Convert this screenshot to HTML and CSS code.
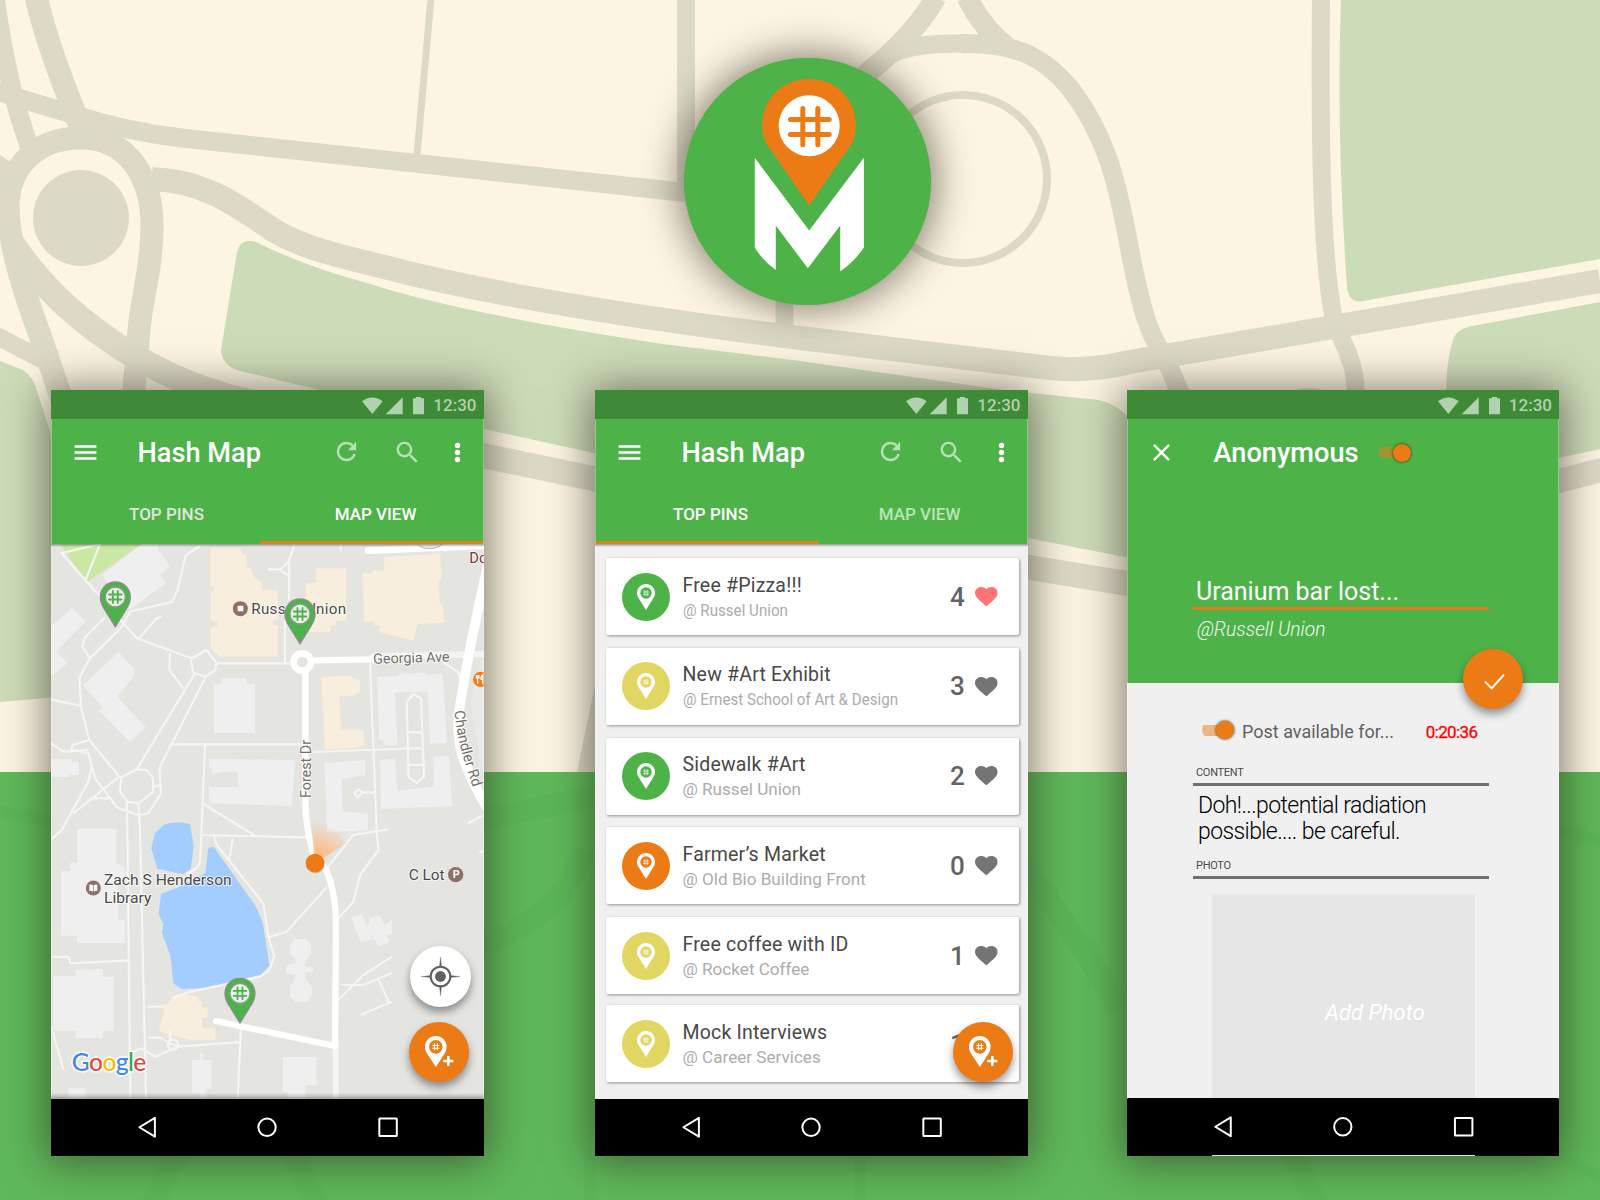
FILE: index.html
```html
<!DOCTYPE html>
<html lang="en">
<head>
<meta charset="utf-8">
<title>Hash Map</title>
<link rel="stylesheet" href="styles.css">
</head>
<body>

<!-- shared symbols -->
<svg class="defs" aria-hidden="true">
  <symbol id="i-menu" viewBox="0 0 24 24"><path d="M3 18h18v-2H3v2zm0-5h18v-2H3v2zm0-7v2h18V6H3z"/></symbol>
  <symbol id="i-refresh" viewBox="0 0 24 24"><path d="M17.65 6.35C16.2 4.9 14.21 4 12 4c-4.42 0-7.99 3.58-7.99 8s3.57 8 7.99 8c3.73 0 6.84-2.55 7.73-6h-2.08c-.82 2.33-3.04 4-5.65 4-3.31 0-6-2.69-6-6s2.69-6 6-6c1.66 0 3.14.69 4.22 1.78L13 11h7V4l-2.35 2.35z"/></symbol>
  <symbol id="i-search" viewBox="0 0 24 24"><path d="M15.5 14h-.79l-.28-.27C15.41 12.59 16 11.11 16 9.5 16 5.91 13.09 3 9.5 3S3 5.91 3 9.5 5.91 16 9.5 16c1.61 0 3.09-.59 4.23-1.57l.27.28v.79l5 4.99L20.49 19l-4.99-5zm-6 0C7.01 14 5 11.99 5 9.5S7.01 5 9.5 5 14 7.01 14 9.5 11.99 14 9.5 14z"/></symbol>
  <symbol id="i-more" viewBox="0 0 24 24"><circle cx="12" cy="6.2" r="2.2"/><circle cx="12" cy="12" r="2.2"/><circle cx="12" cy="17.8" r="2.2"/></symbol>
  <symbol id="i-close" viewBox="0 0 24 24"><path d="M19 6.41L17.59 5 12 10.59 6.41 5 5 6.41 10.59 12 5 17.59 6.41 19 12 13.41 17.59 19 19 17.59 13.41 12z"/></symbol>
  <symbol id="i-heart" viewBox="2 3 20 18.35" preserveAspectRatio="none"><path d="M12 21.35l-1.45-1.32C5.4 15.36 2 12.28 2 8.5 2 5.42 4.42 3 7.5 3c1.74 0 3.41.81 4.5 2.09C13.09 3.81 14.76 3 16.5 3 19.58 3 22 5.42 22 8.5c0 3.78-3.4 6.86-8.55 11.54L12 21.35z"/></symbol>
  <symbol id="i-status" viewBox="0 0 62 18">
    <path d="M0 4.2C6 -.9 14.700 -.9 20.700 4.200L10.350 17z"/><path d="M23.700 17.300H40.700V.3z"/><path d="M51 1.300h3V0h5v1.300h3v16H51z"/>
  </symbol>
  <symbol id="i-nav" viewBox="0 0 433 57">
    <g fill="none" stroke="#fff" stroke-width="2" stroke-linejoin="round"><path d="M104 18.800V37.700L88.500 28.250z"/><circle cx="216.300" cy="28.300" r="8.700"/><rect x="328.700" y="19.500" width="17.500" height="17.500" rx=".6"/></g>
  </symbol>
  <symbol id="i-pin" viewBox="0 0 54 78">
    <path fill="#fff" fill-rule="evenodd" d="M27 0C42 0 54 12 54 27C54 35 51 40 47 46L27 78L7 46C3 40 0 35 0 27C0 12 12 0 27 0ZM27 10A17 17 0 1 0 27 44A17 17 0 1 0 27 10Z"/>
    <path d="M23.500 19.500v16M30.500 19.500v16M19 24h16M19 31h16" fill="none" stroke="#fff" stroke-width="2" stroke-linecap="round"/>
  </symbol>
  <symbol id="i-fab" viewBox="0 0 180 180">
    <path fill="#fff" fill-rule="evenodd" d="M80.500 42C98 42 113 56 113 74C113 83 110 89 106 96L80.500 135L55 96C51 89 48 83 48 74C48 56 63 42 80.500 42ZM80.500 54A20.500 20.500 0 1 0 80.500 95A20.500 20.500 0 1 0 80.500 54Z"/>
    <path d="M76 65v19M85 65v19M71 70.500h19M71 79h19" fill="none" stroke="#fff" stroke-width="3" stroke-linecap="round"/>
    <path d="M118 102v30M103 117h30" fill="none" stroke="#fff" stroke-width="7.500"/>
  </symbol>
  <symbol id="i-mappin" viewBox="0 0 96 140" overflow="visible">
    <path d="M48 3C74 3 93 23 93 49C93 62 89 71 82 82L48 137L14 82C7 71 3 62 3 49C3 23 22 3 48 3Z" fill="#4db349" stroke="#8b8f8a" stroke-width="4"/>
    <circle cx="48" cy="48" r="30" fill="#eceeec" stroke="#8b9a8a" stroke-width="4"/>
    <path d="M40.500 30v36M55.500 30v36M29 40.500h38M29 55.500h38" fill="none" stroke="#4db349" stroke-width="5.500" stroke-linecap="round"/>
  </symbol>
</svg>

<!-- backdrop street map -->
<svg class="backdrop" viewBox="0 0 1600 1200" aria-hidden="true">
  <rect width="1600" height="1200" fill="#fcf5e2"/>
  <g fill="#cddcb8">
    <path d="M237 252Q240 240 250 241Q255 241 262 245Q310 268 367 283Q459 313 663 344L800 361L1004 390L1098 400Q1113 402 1130 418V558L594 453L484 429L240 371Q222 366 221 350Z"/>
    <path d="M0 361L23 370Q34 377 38 394L56 450V697L0 702Z"/>
    <path d="M1341 0Q1336 130 1347 287Q1349 304 1363 301L1600 259V0Z"/>
    <path d="M1600 302L1472 326Q1455 329 1452 343Q1446 365 1446 395V470H1540L1559 458L1600 449Z"/>
  </g>
  <g fill="none" stroke="#dcdac6">
    <path stroke-width="19" d="M-10 89L25 100L78 116Q130 132 182 138L690 193"/>
    <path stroke-width="18" d="M686 0V190M784.500 290V330M-5 335L45 361"/>
    <path stroke-width="7" d="M431 -2L417 155"/>
    <path stroke-width="19" d="M-5 -3Q8 90 30 148"/>
    <path stroke-width="23" d="M36 -3Q50 55 82 130"/>
    <path stroke-width="22" d="M-8 163L15 178"/>
    <path stroke-width="23" d="M62 400L40 335Q8 250 8 205C9 165 38 138 81 138C130 138 152 180 152 226C152 270 141 300 139 330L133 400"/>
    <path stroke-width="25" d="M12 243Q40 285 80 318Q150 375 230 397L480 455L595 479L1027 567L1130 584"/>
    <path stroke-width="24" d="M152 179C210 181 245 212 275 231C310 252 360 260 408 273Q550 307 800 338L1050 368Q1090 372 1130 362L1600 281"/>
    <path stroke-width="18" d="M850 92C882 47 915 43.500 960 43.500"/>
    <path stroke-width="19" d="M960 43.500C1020 42 1046 60 1070 88C1110 140 1119 195 1128 240C1137 290 1147 335 1164 355L1181 395"/>
    <path stroke-width="21" d="M936 -3Q915 35 864 76M967 -3Q982 28 1008 48"/>
    <circle cx="963" cy="179" r="84" stroke-width="8"/>
    <path stroke-width="18" d="M1321 -3C1320 120 1320 250 1334 320C1345 350 1356 360 1356 400"/>
    <circle cx="1309" cy="430" r="34" stroke-width="16"/>
    <path stroke-width="24" d="M1550 483L1605 469"/>
  </g>
  <circle cx="81" cy="218" r="48" fill="#dcdac6"/>
  <path d="M598 670L577 772H620V670Z" fill="#dcdac6"/>
  <rect y="772" width="1600" height="428" fill="#5fb95a"/>
  <g fill="none" stroke="#57b152" stroke-opacity=".35">
    <path stroke-width="22" d="M480 820L600 795M480 945Q560 920 585 850M180 1150L150 1210M290 1150L320 1210M1020 860Q1080 940 1120 1010M1290 1150L1320 1210"/>
    <path stroke-width="12" d="M590 1150V1210M860 1150V1210M0 812L55 822M1555 830L1605 842M1555 1150Q1580 1170 1605 1178"/>
  </g>
</svg>

<header class="brand">
  <svg class="logo" viewBox="73 54 740 740" role="img" aria-label="Hash Map">
    <circle cx="443" cy="424" r="370" fill="#4db349"/>
    <path d="M448 117C530 117 588 178 588 257C588 282 582 300 573 315L448 496L323 315C313 300 307 282 307 257C307 178 366 117 448 117Z" fill="#ec7b16"/>
    <circle cx="448" cy="257" r="91.500" fill="#fff"/>
    <path d="M429 205V314M474 205V314M392 238H508M392 283H508" fill="none" stroke="#ec7b16" stroke-width="15" stroke-linecap="round"/>
    <path d="M285 353L448 571L612 353V622Q585 662 541 694V556L444 684L348 556V689Q310 662 285 622Z" fill="#fff"/>
  </svg>
</header>

<main class="phones">

  <!-- map view -->
  <section class="phone">
    <div class="status"><svg class="status-icons"><use href="#i-status"/></svg><span>12:30</span></div>
    <div class="toolbar">
      <svg class="icon"><use href="#i-menu"/></svg>
      <h1 class="title">Hash Map</h1>
      <svg class="icon faded refresh"><use href="#i-refresh"/></svg>
      <svg class="icon faded search"><use href="#i-search"/></svg>
      <svg class="icon"><use href="#i-more"/></svg>
    </div>
    <nav class="tabs"><span class="tab tab-pins dim-grey">TOP PINS</span><span class="tab tab-map">MAP VIEW</span></nav>
    <div class="track"><div class="indicator right"></div></div>
    <div class="content shade">
      <svg class="map" viewBox="33 12 1299 1665">
        <defs>
          <radialGradient id="cone" gradientUnits="userSpaceOnUse" cx="825" cy="970" r="135"><stop offset=".15" stop-color="#fcb679"/><stop offset=".95" stop-color="#fcb679" stop-opacity="0"/></radialGradient>
          <path id="chandler" d="M1244 512C1250 600 1277 680 1310 775"/>
        </defs>
        <rect x="33" y="12" width="1299" height="1665" fill="#e4e5e0"/>
        <path d="M1332 330L1290 490L1332 720Z" fill="#e9e9e8"/>
        <path d="M60 12H305L140 127Z" fill="#cae7a4"/>
        <!-- grey buildings -->
        <g fill="#efefef">
          <path d="M305 12L187 105L203 130L190 160L240 215L275 205L378 130L360 105L390 78L355 30V12Z"/>
          <path d="M97 203L137 245L48 335L82 370L33 412V258Z"/>
          <path d="M235 336L284 388L280 412L232 470L317 562L270 607L177 512L187 500L129 437Z"/>
          <path d="M543 414H619V432H645V579H522V432H543Z"/>
          <path d="M507 656L765 660L755 798L507 790V741H594V695H541V700H515V683H507Z"/>
          <path d="M33 658H95V665H117V705H88V711H33Z"/>
          <path d="M1011 411L1075 408V402L1157 398V404L1208 402L1221 608L1170 612L1163 455L1120 455L1065 458L1072 610L1060 617L1035 615L1028 598L1018 600Z"/>
          <path d="M1020 660L1065 656L1072 752L1182 740L1180 650L1227 648L1236 798L1023 807Z"/>
          <path d="M853 670L975 660V705L905 718L908 826L983 822V870H862Z"/>
          <path d="M858 810L983 822V868L940 874L862 876Z"/>
        </g>
        <g transform="translate(0 810)" fill="#efefef">
          <path d="M111 57H230V160L252 170L260 190L235 215V330H255V399H111V377H63V184H90V160H111Z"/>
          <path d="M40 498H107V480L189 477V500H221V662H189V684H106V662H40Z"/>
          <path d="M456 750H480V729H490V750H515V836H497V866H480V850H456Z"/>
          <path d="M729 741H830V825H796V866H744V846H729Z"/>
          <path d="M765 387H798L813 405V432L797 450V470H819V487H797V508L816 530V556L800 576H766L750 558V528L766 508V496L738 490V467L766 458V448L750 432V405Z"/>
          <path d="M933 324L965 311L983 350L990 325L1018 317L1035 345L1056 327V372L1040 375L1048 398L1016 408L990 368L995 388L962 396Z"/>
          <path d="M86 834H137V866H86Z"/>
        </g>
        <!-- beige buildings -->
        <g fill="#f7eedd" stroke="#f3e4c6" stroke-width="2">
          <path d="M510 24H606V42H621V82H633Q640 120 667 125V150H714V240H700V255H714V351H540L511 325V260H533V244H511V153H521V140H510Z"/>
          <path d="M827 84H920V243H888V258H873V277H797V128H827Z"/>
          <path d="M1031 50L1202 40L1205 124H1196L1200 190H1209L1214 248L1133 254L1121 303L1017 277V257H1001V245H971L967 98H997V90H1031Z"/>
          <path d="M843 412L937 405V412L962 422V455L945 467L898 471L905 568L970 570L975 617L941 625L854 628Z"/>
          <path d="M400 1368Q430 1358 445 1364L478 1372V1385H487V1402H504V1435H488V1464H527V1501H452L356 1475L372 1408H363L372 1391H384Z"/>
        </g>
        <!-- water -->
        <g fill="#a3ccff">
          <path d="M370 856Q400 842 450 852L461 918L452 987L428 1003L352 986L334 925L345 880Z"/>
          <path d="M505 923L521 920L645 1096Q668 1140 671 1165L688 1277L662 1304L510 1343L425 1347L400 1330L392 1250L366 1178L370 1152L356 1122L363 1062L420 1040L496 1000Z"/>
        </g>
        <!-- footpaths -->
        <g fill="none" stroke="#f5f5f5" stroke-width="6.500" stroke-linejoin="round">
          <path d="M62 36L290 295L455 355L500 330L530 370L525 390L497 410L460 398L452 360M62 40L180 12L135 125M480 18L437 45L412 152L396 186L270 215L245 262L150 355L118 412L123 500L148 600L240 712M195 232L135 292L127 320L150 355M295 297L350 235L364 230M390 340L388 390L430 445"/>
          <path d="M465 400L290 688L244 712L240 755L262 785L295 790L340 755L338 712L320 690L290 688M497 410L358 685L363 760L325 820L295 825L232 803L165 715L145 640L95 628L98 615L148 600M33 478L123 498M33 610L70 635L145 630M240 708L100 820M150 775H205M155 680L145 725L65 870L33 900M340 740L362 735M260 785L262 870L271 1675M295 790L300 870L318 1675"/>
          <path d="M765 12L745 65L720 90L748 110M684 88H720M748 65L747 180M735 240V370M530 370H750M902 12V32M395 613H790M495 613L484 885L480 965Q475 990 440 1000M490 792L650 890M484 885L800 892M820 636L1148 624M990 370L1010 870L1015 930L960 1005L940 1085L895 1135M578 895L568 960M520 885L530 915L670 1090L685 1190L703 1250L688 1290L662 1310L440 1358L395 1375M685 1192L740 1175L860 1042M860 985L940 885L1045 868M1100 485L1120 463L1143 475L1152 710L1130 728L1106 712L1100 485M1100 577H1148M1106 675H1150M1005 758H968M968 758L955 748L943 760L952 772L968 758M1208 365L1255 398L1262 420"/>
          <path d="M33 1251H85L92 1270L270 1261M33 1460L70 1587M325 1400H370M325 1493H360L390 1510L415 1520L600 1506M415 1520L345 1550L305 1525L270 1540M390 1470V1500M603 1460L593 1675M902 1335H968L1056 1299M895 1380L970 1305L1056 1250M1015 1318L1048 1390M962 1424L1056 1385M1284 850L1332 825M1318 938L1332 932"/>
          <circle cx="399" cy="1514" r="15"/>
        </g>
        <!-- streets -->
        <g fill="none" stroke="#fff" stroke-linecap="round" stroke-linejoin="round">
          <path d="M887 1500V1690" stroke="#f5f5f5" stroke-width="18"/>
          <path d="M1000 350L1332 342" stroke="#f3f3f2" stroke-width="20"/>
          <path d="M984 32L1332 18" stroke-width="20"/>
          <path d="M820 361L1000 358" stroke-width="19"/>
          <path d="M796 400V780Q796 830 805 880L820 945L858 988Q888 1060 888 1150L885 1518L528 1443" stroke-width="19"/>
          <path d="M1348 60Q1290 300 1256 520Q1250 570 1265 640Q1290 720 1345 810" stroke-width="29"/>
          <circle cx="787" cy="366" r="26" stroke-width="20"/>
        </g>
        <ellipse cx="1169" cy="2" rx="42" ry="24" fill="#e9e9e8" stroke="#b9b9b4" stroke-width="3"/>
        <path d="M825 970L812 838Q870 850 920 910Z" fill="url(#cone)"/>
        <circle cx="826" cy="972" r="28" fill="#8a6a4a" opacity=".35"/>
        <circle cx="825" cy="969" r="28" fill="#ec7b16"/>
        <!-- places -->
        <circle cx="601" cy="206" r="22.500" fill="#8f7067"/><rect x="593" y="197" width="17" height="17" rx="2" fill="#fff"/>
        <circle cx="160" cy="1044" r="22.500" fill="#8f7067"/><path d="M148 1034Q154 1032 159 1036V1055Q154 1051 148 1053ZM172 1034Q166 1032 161 1036V1055Q166 1051 172 1053Z" fill="#fff"/>
        <circle cx="1247" cy="1004" r="23" fill="#8f7067"/>
        <circle cx="1322" cy="418" r="23" fill="#f57f17"/><path d="M1313 405V431M1309 405V414H1317V405M1328 431V405Q1322 408 1323 418H1328" fill="none" stroke="#fff" stroke-width="3.500"/>
        <g class="label">
          <text x="1288" y="68" font-size="44" class="food">Do</text>
          <text x="634" y="222" font-size="45.500" textLength="284">Russell Union</text>
          <text x="1000" y="371" font-size="43" textLength="229" class="street" transform="rotate(-1.500 1000 371)">Georgia Ave</text>
          <text x="0" y="0" font-size="43" textLength="174" class="street" transform="translate(813 774) rotate(-90)">Forest Dr</text>
          <text font-size="44" class="street"><textPath href="#chandler">Chandler Rd</textPath></text>
          <text x="192" y="1035" font-size="46" textLength="383" lengthAdjust="spacingAndGlyphs">Zach S Henderson</text>
          <text x="192" y="1090" font-size="46" textLength="142" lengthAdjust="spacingAndGlyphs">Library</text>
          <text x="1106" y="1021" font-size="46" textLength="108" lengthAdjust="spacingAndGlyphs">C Lot</text>
        </g>
        <text x="1238.500" y="1015" class="parking">P</text>
        <text x="95" y="1594" class="google" textLength="224"><tspan fill="#4285f4">G</tspan><tspan fill="#ea4335">o</tspan><tspan fill="#fbbc05">o</tspan><tspan fill="#4285f4">g</tspan><tspan fill="#34a853">l</tspan><tspan fill="#ea4335">e</tspan></text>
        <use href="#i-mappin" x="178" y="123" width="96" height="140"/>
        <use href="#i-mappin" x="732" y="174" width="96" height="140"/>
        <use href="#i-mappin" x="552" y="1312" width="96" height="140"/>
      </svg>
    </div>
    <svg class="navbar"><use href="#i-nav"/></svg>
    <div class="round locate">
      <svg viewBox="0 0 180 180"><circle cx="90" cy="90" r="29" fill="none" stroke="#616161" stroke-width="6"/><circle cx="90" cy="90" r="16" fill="#616161"/><path d="M87 62L90 33L93 62ZM87 118L90 147L93 118ZM62 87L33 90L62 93ZM118 87L147 90L118 93Z" fill="#616161" stroke="#616161"/></svg>
    </div>
    <div class="round add"><svg><use href="#i-fab"/></svg></div>
  </section>

  <!-- top pins -->
  <section class="phone">
    <div class="status"><svg class="status-icons"><use href="#i-status"/></svg><span>12:30</span></div>
    <div class="toolbar">
      <svg class="icon"><use href="#i-menu"/></svg>
      <h1 class="title">Hash Map</h1>
      <svg class="icon faded refresh"><use href="#i-refresh"/></svg>
      <svg class="icon faded search"><use href="#i-search"/></svg>
      <svg class="icon"><use href="#i-more"/></svg>
    </div>
    <nav class="tabs"><span class="tab tab-pins">TOP PINS</span><span class="tab tab-map dim">MAP VIEW</span></nav>
    <div class="track"><div class="indicator"></div></div>
    <div class="content list">
      <article class="card"><span class="badge green"><svg><use href="#i-pin"/></svg></span><div class="info"><h2>Free #Pizza!!!</h2><p class="condensed">@ Russel Union</p></div><b class="count">4</b><svg class="heart liked"><use href="#i-heart"/></svg></article>
      <article class="card"><span class="badge yellow"><svg><use href="#i-pin"/></svg></span><div class="info"><h2>New #Art Exhibit</h2><p class="condensed">@ Ernest School of Art &amp; Design</p></div><b class="count">3</b><svg class="heart"><use href="#i-heart"/></svg></article>
      <article class="card"><span class="badge green"><svg><use href="#i-pin"/></svg></span><div class="info"><h2>Sidewalk #Art</h2><p>@ Russel Union</p></div><b class="count">2</b><svg class="heart"><use href="#i-heart"/></svg></article>
      <article class="card"><span class="badge orange"><svg><use href="#i-pin"/></svg></span><div class="info"><h2>Farmer’s Market</h2><p>@ Old Bio Building Front</p></div><b class="count">0</b><svg class="heart"><use href="#i-heart"/></svg></article>
      <article class="card"><span class="badge yellow"><svg><use href="#i-pin"/></svg></span><div class="info"><h2>Free coffee with ID</h2><p>@ Rocket Coffee</p></div><b class="count">1</b><svg class="heart"><use href="#i-heart"/></svg></article>
      <article class="card last"><span class="badge yellow"><svg><use href="#i-pin"/></svg></span><div class="info"><h2>Mock Interviews</h2><p>@ Career Services</p></div><b class="count">1</b><svg class="heart"><use href="#i-heart"/></svg></article>
    </div>
    <svg class="navbar"><use href="#i-nav"/></svg>
    <div class="round add"><svg><use href="#i-fab"/></svg></div>
  </section>

  <!-- new post -->
  <section class="phone compose">
    <div class="status"><svg class="status-icons"><use href="#i-status"/></svg><span>12:30</span></div>
    <div class="hero">
      <div class="toolbar">
        <svg class="icon"><use href="#i-close"/></svg>
        <h1 class="title">Anonymous</h1>
        <span class="switch"><i></i></span>
      </div>
      <div class="column heading">
        <div class="subject">Uranium bar lost...</div>
        <div class="place">@Russell Union</div>
      </div>
    </div>
    <div class="content form">
      <div class="column">
        <div class="timer-row"><span class="switch light"><i></i></span><span class="timer-label">Post available for...</span><span class="timer">0:20:36</span></div>
        <div class="field">CONTENT</div>
        <p class="message">Doh!...potential radiation<br>possible.... be careful.</p>
        <div class="field photo-field">PHOTO</div>
        <div class="photo"><span>Add Photo</span></div>
      </div>
    </div>
    <svg class="navbar"><use href="#i-nav"/></svg>
    <div class="photo-edge"></div>
    <div class="round confirm"><svg viewBox="0 0 180 180"><path d="M66 98L86 118L123 77" fill="none" stroke="#fff" stroke-width="6"/></svg></div>
  </section>
</main>
</body>
</html>
```
FILE: styles.css
```css
* { box-sizing: border-box; }

body {
  margin: 0;
  width: 1600px;
  height: 1200px;
  overflow: hidden;
  position: relative;
  font-family: Roboto, "Liberation Sans", sans-serif;
}

svg { display: block; flex: none; }
h1, h2, p { margin: 0; font-weight: 400; }

.defs { position: absolute; width: 0; height: 0; }
.backdrop { position: absolute; inset: 0; width: 1600px; height: 1200px; z-index: -1; }

.brand { height: 390px; padding: 58px 0 0 684px; }
.logo {
  width: 247px;
  height: 247px;
  border-radius: 50%;
  background: #4db349;
  box-shadow: 0 0 38px 4px rgba(50, 42, 30, .6);
}

.phones {
  display: grid;
  grid-template-columns: 432.500px 432.500px 431.500px;
  column-gap: 111.500px;
  padding-left: 51px;
}
.phone {
  position: relative;
  display: flex;
  flex-direction: column;
  height: 766px;
  background: #4db349;
  box-shadow: 0 2px 40px 4px rgba(45, 38, 28, .6);
}
.phone::after {
  content: "";
  position: absolute;
  inset: 29px 0 57px;
  border: solid rgba(255, 255, 255, .35);
  border-width: 0 1px;
}
.compose { margin-left: -12px; width: 432px; }

.status {
  height: 29px;
  flex: none;
  display: flex;
  align-items: center;
  justify-content: flex-end;
  gap: 9px;
  padding: 0 7px 0 0;
  background: #3e8a37;
  color: #b1d2ae;
  font-size: 17px;
  font-weight: 500;
}
.status-icons { width: 62px; height: 18px; fill: #b1d2ae; margin-top: 2px; }

.toolbar {
  height: 68px;
  flex: none;
  display: flex;
  align-items: center;
  padding: 0 12px 1px 20px;
  color: #fff;
}
.icon { width: 29px; height: 29px; fill: currentColor; }
.faded { opacity: .6; }
.refresh { margin: -2px 32px 0 0; }
.search { margin-right: 21px; }
.title { flex: 1; padding-left: 37.500px; font-size: 27.200px; font-weight: 500; line-height: 32px; white-space: nowrap; }

.tabs {
  height: 54px;
  flex: none;
  display: grid;
  grid-template-columns: 231px 187px;
  align-items: center;
  color: #fff;
  font-size: 17px;
  font-weight: 500;
}
.tab { text-align: center; }
.dim { color: #bce3ba; }
.dim-grey { color: #e0e4df; }
.track { height: 3px; flex: none; }
.indicator { width: 224px; height: 3px; background: #e57e1d; }
.indicator.right { margin-left: auto; }

.content { flex: 1; min-height: 0; overflow: hidden; background: #f0f0f0; position: relative; }
.content::before {
  content: "";
  position: absolute;
  inset: 0 0 auto;
  height: 3px;
  background: linear-gradient(rgba(80, 80, 80, .55), rgba(80, 80, 80, 0));
  z-index: 1;
}
.form::before { display: none; }
.shade::after {
  content: "";
  position: absolute;
  inset: auto 0 0;
  height: 6px;
  background: linear-gradient(rgba(80, 80, 80, 0), rgba(80, 80, 80, .45));
}
.navbar { width: 100%; height: 57px; background: #000; }
.compose .navbar { height: 58px; }
.photo-edge { position: absolute; left: 85px; bottom: 0; width: 263px; height: 1px; background: #dfe3dd; }

.map { width: 433px; height: 555px; }
.label text {
  fill: #4a4a4a;
  stroke: #fff;
  stroke-opacity: .75;
  stroke-width: 6px;
  paint-order: stroke;
}
.label text.street { fill: #727068; }
.label text.food { fill: #7b3b32; }
.parking { font-size: 32px; font-weight: 700; fill: #fff; }
.google {
  font-family: Lato, sans-serif;
  font-size: 74px;
  font-weight: 500;
  stroke: #fff;
  stroke-width: 9px;
  stroke-linejoin: round;
  paint-order: stroke;
}

.round {
  position: absolute;
  left: 358px;
  top: 632px;
  z-index: 2;
  width: 60px;
  height: 60px;
  border-radius: 50%;
  background: #ec7b16;
  box-shadow: 0 5px 8px rgba(0, 0, 0, .4);
}
.round svg { width: 60px; height: 60px; }
.locate { left: 359px; top: 556px; width: 61px; height: 61px; background: #fff; }
.locate svg { width: 61px; height: 61px; }
.confirm { left: 336px; top: 259px; }

.list { padding: 14px 8.500px 0 11px; display: flex; flex-direction: column; gap: 12.800px; }
.card {
  height: 77px;
  flex: none;
  display: flex;
  align-items: center;
  padding: 0 21px 0 15.500px;
  background: #fff;
  border-radius: 2px;
  box-shadow: 1px 1px 3px rgba(0, 0, 0, .4);
}
.card.last { margin-top: -1.800px; }
.badge { width: 48px; height: 48px; border-radius: 50%; display: grid; place-items: center; }
.badge svg { width: 18px; height: 26px; }
.green { background: #4db349; }
.yellow { background: #e2d662; }
.orange { background: #ec7b16; }
.info { flex: 1; padding: 2px 0 0 13px; line-height: 25px; white-space: nowrap; }
.info h2 { font-size: 19.500px; color: #484848; letter-spacing: .2px; }
.info p { font-size: 17.100px; color: #acacac; }
.condensed { transform: scaleX(.885); transform-origin: left; }
.count { font-size: 26px; font-weight: 500; color: #646464; margin-right: 10.500px; }
.heart { width: 22.700px; height: 19.300px; fill: #747474; }
.liked { fill: #ff7474; }

.hero { height: 264px; flex: none; }
.compose .title { flex: none; }
.column { width: 296px; margin-left: 66px; }
.heading { padding-top: 88px; }
.subject {
  height: 35px;
  line-height: 34px;
  padding-left: 3px;
  border-bottom: 3px solid #e27d1c;
  font-size: 25px;
  color: #fff;
}
.place {
  padding: 7px 0 0 4px;
  line-height: 26px;
  font-size: 19.300px;
  font-weight: 300;
  font-style: italic;
  color: #f0f8ef;
}

.switch {
  width: 32px;
  height: 18px;
  margin-left: 20px;
  display: flex;
  align-items: center;
  justify-content: flex-end;
  border-radius: 9px;
  background: linear-gradient(#a0962f, #a0962f) left center / 24px 11px no-repeat;
}
.switch i { width: 18px; height: 18px; border-radius: 50%; background: #ec7b16; box-shadow: 0 0 2px 1px rgba(60, 60, 30, .6); }
.switch.light { margin: -2px 0 0 9px; background-image: linear-gradient(#efb583, #efb583); }

.timer-row { height: 24px; margin-top: 36px; display: flex; align-items: center; }
.timer-label { padding-left: 8px; font-size: 18px; color: #616161; }
.timer { margin: 1px 11.500px 0 auto; font-size: 17px; letter-spacing: -.6px; color: #f00; -webkit-text-stroke: .3px #f00; }
.field {
  margin-top: 21px;
  height: 22px;
  line-height: 17px;
  padding-left: 3px;
  border-bottom: 3px solid #707070;
  font-size: 11px;
  letter-spacing: -.3px;
  color: #4a4a4a;
}
.photo-field { margin-top: 13px; }
.message {
  margin-top: 7px;
  padding-left: 5px;
  height: 51px;
  line-height: 25.500px;
  font-size: 23px;
  font-weight: 300;
  letter-spacing: -.6px;
  color: #000;
  white-space: nowrap;
}
.photo { width: 263px; height: 260px; margin: 15px 0 0 19px; padding: 105px 0 0 113px; background: #e6e6e6; }
.photo span { font-size: 22px; line-height: 28px; font-style: italic; color: #fff; }
```
